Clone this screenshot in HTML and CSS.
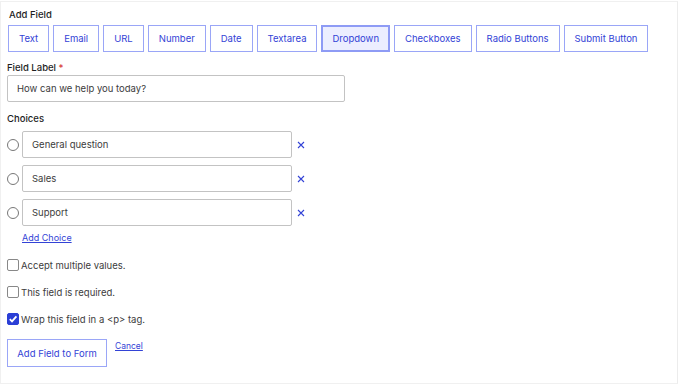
FILE: index.html
```html
<!DOCTYPE html>
<html lang="en">
<head>
<meta charset="UTF-8" />
<title>Add Field</title>
<link rel="stylesheet" href="styles.css">
</head>
<body>

<div class="panel">
  <div class="title">Add Field</div>
  <div class="types">
    <button class="type">Text</button>
    <button class="type">Email</button>
    <button class="type">URL</button>
    <button class="type">Number</button>
    <button class="type">Date</button>
    <button class="type">Textarea</button>
    <button class="type active">Dropdown</button>
    <button class="type">Checkboxes</button>
    <button class="type">Radio Buttons</button>
    <button class="type">Submit Button</button>
  </div>

  <label class="label">Field Label <span class="req">*</span></label>
  <div class="input wide">How can we help you today?</div>

  <div class="label choices-label">Choices</div>
  <div class="choices">
    <div class="choice">
      <span class="radio"></span>
      <div class="input">General question</div>
      <svg class="remove" width="8" height="8" viewBox="0 0 8 8"><path d="M1 1 L7 7 M7 1 L1 7" stroke="#3343d6" stroke-width="1.1"/></svg>
    </div>
    <div class="choice">
      <span class="radio"></span>
      <div class="input">Sales</div>
      <svg class="remove" width="8" height="8" viewBox="0 0 8 8"><path d="M1 1 L7 7 M7 1 L1 7" stroke="#3343d6" stroke-width="1.1"/></svg>
    </div>
    <div class="choice">
      <span class="radio"></span>
      <div class="input">Support</div>
      <svg class="remove" width="8" height="8" viewBox="0 0 8 8"><path d="M1 1 L7 7 M7 1 L1 7" stroke="#3343d6" stroke-width="1.1"/></svg>
    </div>
  </div>
  <a href="#" class="add-choice">Add Choice</a>

  <div class="checks">
    <label class="check"><span class="box"></span>Accept multiple values.</label>
    <label class="check"><span class="box"></span>This field is required.</label>
    <label class="check"><span class="box on">
      <svg width="10" height="10" viewBox="0 0 10 10"><path d="M1.8 5.2 L4 7.4 L8.4 2.4" fill="none" stroke="#fff" stroke-width="1.8"/></svg>
    </span>Wrap this field in a &lt;p&gt; tag.</label>
  </div>

  <div class="actions">
    <button class="submit">Add Field to Form</button>
    <a href="#" class="cancel">Cancel</a>
  </div>
</div>

</body>
</html>
```

FILE: styles.css
```css
body {
  margin: 0;
  background: #fff;
  font-family: Inter, "Liberation Sans", sans-serif;
  font-size: 9.5px;
  color: #3c3c3c;
}
.panel {
  margin: 1px 2px 0 0;
  height: 383px;
  box-sizing: border-box;
  border: 1px solid #f0f0f0;
  border-right-color: #ececec;
  padding: 6px 0 0 6px;
}
.title {
  margin-left: 2px;
  color: #1e1e1e;
  font-weight: 500;
  line-height: 14px;
}
.types {
  display: flex;
  gap: 4px;
  margin-top: 3px;
  margin-left: 1px;
}
.type {
  height: 27px;
  padding: 0 10px;
  background: #fff;
  border: 1px solid #9aa6f7;
  color: #3343d6;
  font-family: inherit;
  font-size: 9.5px;
  white-space: nowrap;
  cursor: pointer;
}
.type.active {
  background: #eceeff;
  border: 2px solid #8e9bf5;
  padding: 0 9px;
}
.label {
  display: block;
  margin-top: 9px;
  line-height: 14px;
  color: #1e1e1e;
  font-weight: 500;
}
.req {
  color: #d63638;
}
.input {
  box-sizing: border-box;
  height: 27px;
  border: 1px solid #c3c3c3;
  border-radius: 2px;
  display: flex;
  align-items: center;
  padding-left: 9px;
  color: #3c3c3c;
}
.input.wide {
  width: 338px;
}
.choices-label {
  margin-top: 10px;
}
.choices {
  display: flex;
  flex-direction: column;
  gap: 7px;
  margin-top: 5px;
}
.choice {
  display: flex;
  align-items: center;
}
.choice .input {
  width: 270px;
}
.radio {
  box-sizing: border-box;
  width: 12px;
  height: 12px;
  border: 1px solid #777;
  border-radius: 50%;
  margin-right: 3px;
}
.remove {
  margin-left: 5px;
}
.add-choice {
  display: block;
  width: max-content;
  margin: 5px 0 0 15px;
  line-height: 14px;
  color: #3343d6;
  font-size: 9px;
}
.checks {
  display: flex;
  flex-direction: column;
  gap: 13px;
  margin-top: 13px;
}
.check {
  display: flex;
  align-items: center;
  height: 14px;
}
.box {
  box-sizing: border-box;
  width: 12px;
  height: 12px;
  border: 1px solid #888;
  border-radius: 2px;
  margin-right: 2px;
  display: flex;
  align-items: center;
  justify-content: center;
}
.box.on {
  background: #2b3fd6;
  border-color: #2b3fd6;
}
.actions {
  display: flex;
  align-items: flex-start;
  gap: 8px;
  margin-top: 13px;
}
.submit {
  width: 100px;
  height: 28px;
  background: #fff;
  border: 1px solid #9aa6f7;
  color: #3343d6;
  font-family: inherit;
  font-size: 9.5px;
  white-space: nowrap;
}
.cancel {
  color: #3343d6;
  font-size: 8.5px;
  margin-top: 2px;
}
```
